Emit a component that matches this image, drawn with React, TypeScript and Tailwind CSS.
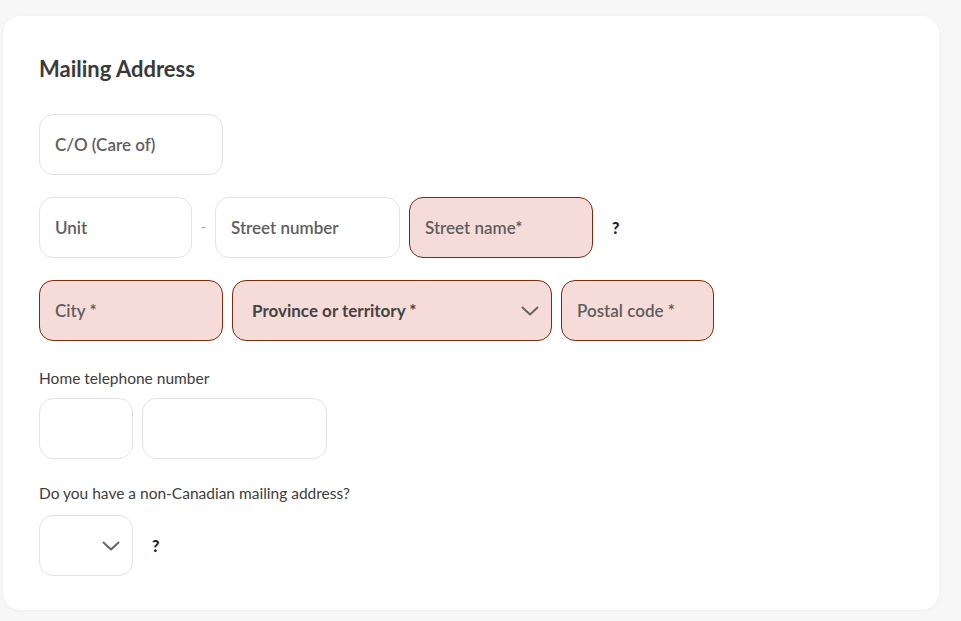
import React from "react";

const font = { fontFamily: "Lato, 'Noto Sans', sans-serif" };

function Chevron() {
  return (
    <svg width="18" height="10" viewBox="0 0 18 10" fill="none">
      <path d="M1.5 1.5 L9 8.5 L16.5 1.5" stroke="#666" strokeWidth="2" strokeLinecap="round" strokeLinejoin="round" />
    </svg>
  );
}

function Field({ label, w, error }: { label?: string; w: string; error?: boolean }) {
  return (
    <div
      className={`${w} h-[61px] rounded-[14px] border flex items-center px-[15px] text-[17px] font-semibold text-[#5e5e5e] ${
        error ? "bg-[#f6dcd9] border-[#7f2a0c]" : "bg-white border-[#e3e3e3]"
      }`}
    >
      {label}
    </div>
  );
}

export default function App() {
  return (
    <div className="w-[961px] h-[621px] bg-[#f7f7f7] pt-[16px] pl-[3px]" style={font}>
      <div className="w-[936px] h-[594px] bg-white rounded-[18px] shadow-[0_1px_4px_rgba(0,0,0,0.04)] pl-[36px] pt-[39px]">
        <h2 className="text-[22px] font-bold text-[#3a3a3a] leading-[28px]">Mailing Address</h2>
        <div className="mt-[31px] flex flex-col gap-[22px]">
          <Field label="C/O (Care of)" w="w-[184px]" />
          <div className="flex items-center">
            <Field label="Unit" w="w-[153px]" />
            <div className="w-[23px] text-center text-[#999] text-[13px]">-</div>
            <Field label="Street number" w="w-[185px]" />
            <div className="w-[9px]" />
            <Field label="Street name*" w="w-[184px]" error />
            <span className="ml-[19px] text-[16px] font-black text-[#222]">?</span>
          </div>
          <div className="flex items-center gap-[9px]">
            <Field label="City *" w="w-[184px]" error />
            <div className="w-[320px] h-[61px] rounded-[14px] border bg-[#f6dcd9] border-[#7f2a0c] flex items-center justify-between pl-[19px] pr-[12px] text-[17px] font-bold text-[#444]">
              <span>Province or territory *</span>
              <Chevron />
            </div>
            <Field label="Postal code *" w="w-[153px]" error />
          </div>
        </div>
        <div className="mt-[27px] text-[15.5px] font-normal text-[#3d3d3d] leading-[20px]">Home telephone number</div>
        <div className="mt-[10px] flex gap-[9px]">
          <Field w="w-[94px]" />
          <Field w="w-[185px]" />
        </div>
        <div className="mt-[24px] text-[15.5px] font-normal text-[#3d3d3d] leading-[20px]">Do you have a non-Canadian mailing address?</div>
        <div className="mt-[12px] flex items-center">
          <div className="w-[94px] h-[61px] rounded-[14px] border bg-white border-[#e3e3e3] flex items-center justify-end pr-[12px]">
            <Chevron />
          </div>
          <span className="ml-[19px] text-[16px] font-black text-[#222]">?</span>
        </div>
      </div>
    </div>
  );
}
